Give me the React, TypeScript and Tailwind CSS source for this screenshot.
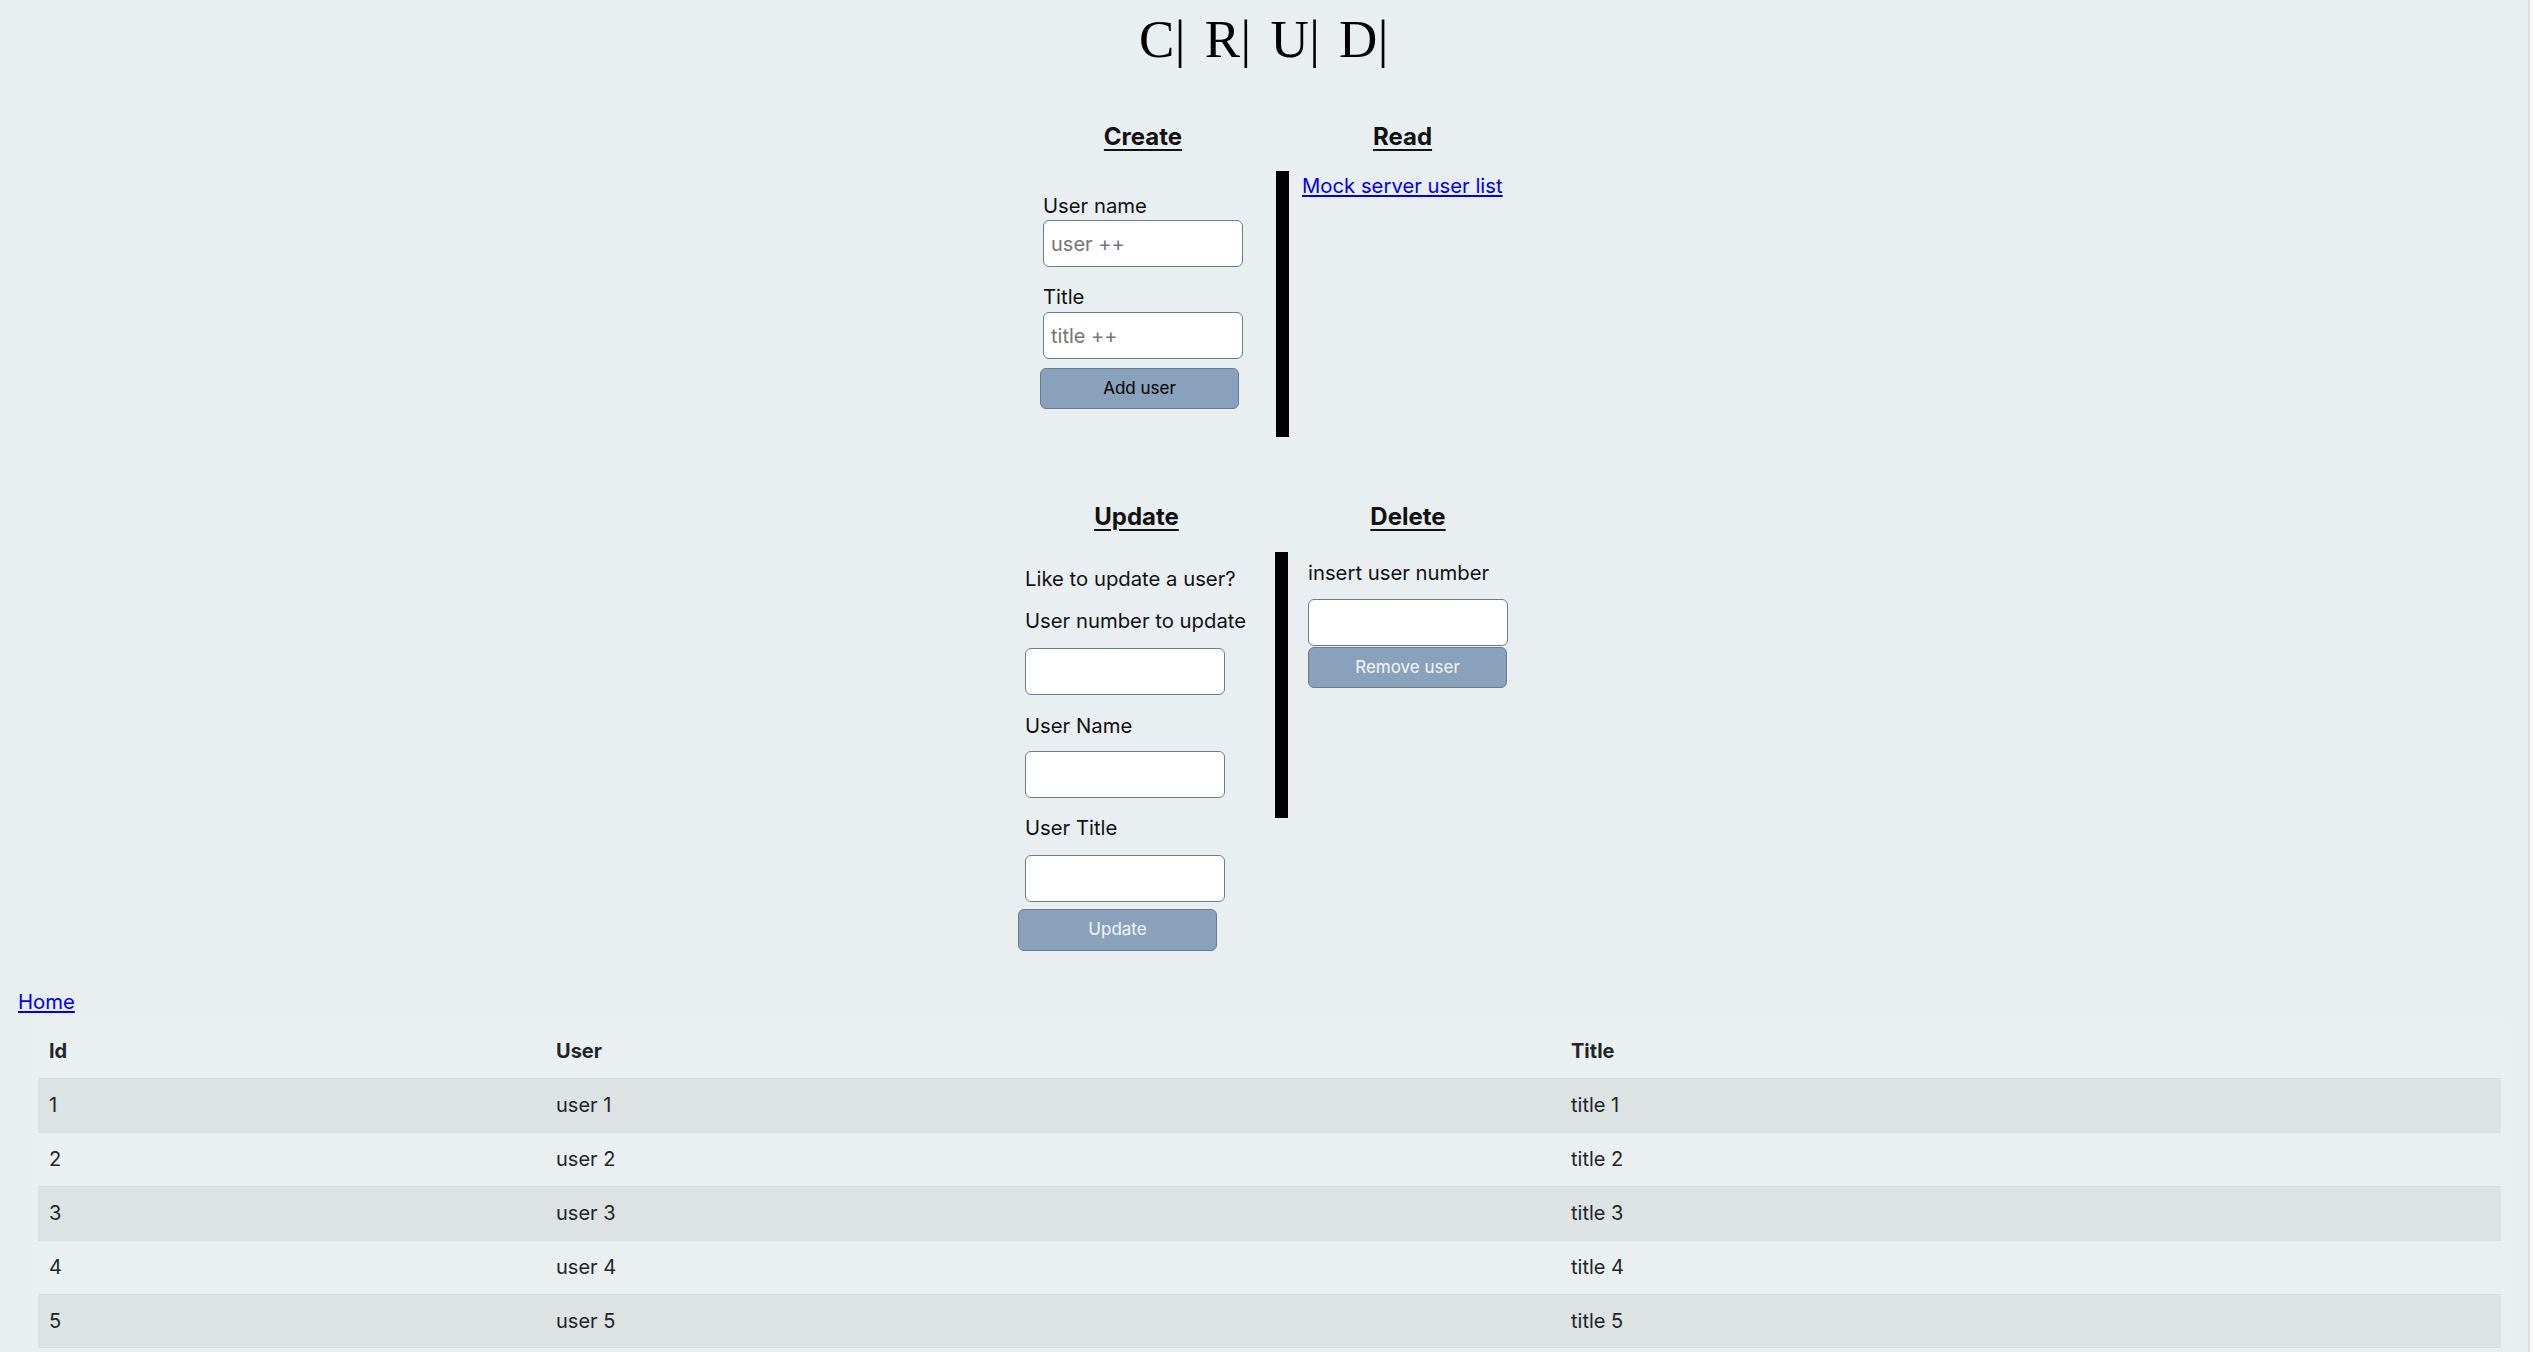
import React from 'react';

const users = [
  { id: 1, name: 'user 1', title: 'title 1' },
  { id: 2, name: 'user 2', title: 'title 2' },
  { id: 3, name: 'user 3', title: 'title 3' },
  { id: 4, name: 'user 4', title: 'title 4' },
  { id: 5, name: 'user 5', title: 'title 5' },
];

function Field({ placeholder }: { placeholder?: string }) {
  return (
    <input
      placeholder={placeholder}
      className="h-[47px] w-[200px] rounded-[6px] border border-[#6d7c90] bg-white px-[7px] text-[20px] text-black placeholder:text-[#767676] outline-none"
    />
  );
}

function Btn({ label, light }: { label: string; light?: boolean }) {
  return (
    <button
      className={
        light
          ? 'w-[199px] rounded-[6px] border border-[#6a7b90] bg-[#8aa1bb] text-[17px] text-[#f3f6f9]'
          : 'w-[199px] rounded-[6px] border border-[#6a7b90] bg-[#8aa1bb] text-[17px] text-black'
      }
    >
      {label}
    </button>
  );
}

function Heading({ children }: { children: React.ReactNode }) {
  return <h3 className="text-center text-[24px] font-bold leading-[30px] underline underline-offset-[4px] decoration-[2px]">{children}</h3>;
}

export default function App() {
  return (
    <div className="flex h-[1352px] overflow-hidden bg-[#e9eef1] font-[Inter,sans-serif] text-[20.3px] text-[#111]">
      <main className="flex-1 flex flex-col">
        <h1 className="pt-[13px] text-center font-['Liberation_Serif',serif] text-[53px] leading-[53px] text-black [word-spacing:5px] tracking-[0.5px]">
          C| R| U| D|
        </h1>

        {/* create / read */}
        <div className="mt-[56px] flex justify-center pl-[18px]">
          <div className="flex w-[200px] flex-col">
            <Heading>Create</Heading>
            <label className="mt-[42px] leading-[24px]">User name</label>
            <div className="mt-[2px]"><Field placeholder="user ++" /></div>
            <label className="mt-[18px] leading-[24px]">Title</label>
            <div className="mt-[3px]"><Field placeholder="title ++" /></div>
            <div className="ml-[-3px] mt-[9px] flex h-[41px]"><Btn label="Add user" /></div>
          </div>
          <div className="ml-[33px] flex w-[227px] flex-col">
            <div className="pl-[26px]"><Heading>Read</Heading></div>
            <div className="mt-[19px] h-[266px] border-l-[13px] border-black pl-[13px]">
              <a href="/#" className="block leading-[30px] text-[#0000ee] underline">Mock server user list</a>
            </div>
          </div>
        </div>

        {/* update / delete */}
        <div className="mt-[65px] flex justify-center pl-[5px]">
          <div className="flex w-[223px] flex-col">
            <Heading>Update</Heading>
            <p className="mt-[35px] leading-[24px]">Like to update a user?</p>
            <p className="mt-[18px] leading-[24px] whitespace-nowrap">User number to update</p>
            <div className="mt-[15px]"><Field /></div>
            <p className="mt-[19px] leading-[24px]">User Name</p>
            <div className="mt-[13px]"><Field /></div>
            <p className="mt-[18px] leading-[24px]">User Title</p>
            <div className="mt-[15px]"><Field /></div>
            <div className="ml-[-7px] mt-[7px] flex h-[42px]"><Btn label="Update" light /></div>
          </div>
          <div className="ml-[27px] flex w-[233px] flex-col">
            <div className="pl-[33px]"><Heading>Delete</Heading></div>
            <div className="mt-[20px] h-[266px] border-l-[13px] border-black pl-[20px]">
              <p className="mt-[9px] leading-[24px]">insert user number</p>
              <div className="mt-[14px]"><Field /></div>
              <div className="mt-[1px] flex h-[41px]"><Btn label="Remove user" light /></div>
            </div>
          </div>
        </div>

        <div className="mt-[36px] pl-[18px]">
          <a href="/#" className="leading-[24px] text-[#0000ee] underline">Home</a>
        </div>

        <div className="ml-[32px] mr-[21px] mt-[2px] bg-[#eaf0f0] px-[6px] pt-[5px]">
          <table className="w-full table-fixed border-collapse text-left text-[20px] text-[#212529]">
            <colgroup>
              <col className="w-[507px]" />
              <col className="w-[1015px]" />
              <col />
            </colgroup>
            <thead>
              <tr className="h-[54px] border-b border-[#d7dcdc]">
                <th className="px-[11px] font-bold">Id</th>
                <th className="px-[11px] font-bold">User</th>
                <th className="px-[11px] font-bold">Title</th>
              </tr>
            </thead>
            <tbody>
              {users.map((u, i) => (
                <tr key={u.id} className={i % 2 === 0 ? 'h-[53.9px] border-b border-[#d7dcdc] bg-[#dde2e2]' : 'h-[53.9px] border-b border-[#d7dcdc]'}>
                  <td className="px-[11px]">{u.id}</td>
                  <td className="px-[11px]">{u.name}</td>
                  <td className="px-[11px]">{u.title}</td>
                </tr>
              ))}
            </tbody>
          </table>
        </div>
      </main>
      <aside className="w-[6px] border-l-2 border-[#dedede] bg-[#fafafa]" />
    </div>
  );
}
